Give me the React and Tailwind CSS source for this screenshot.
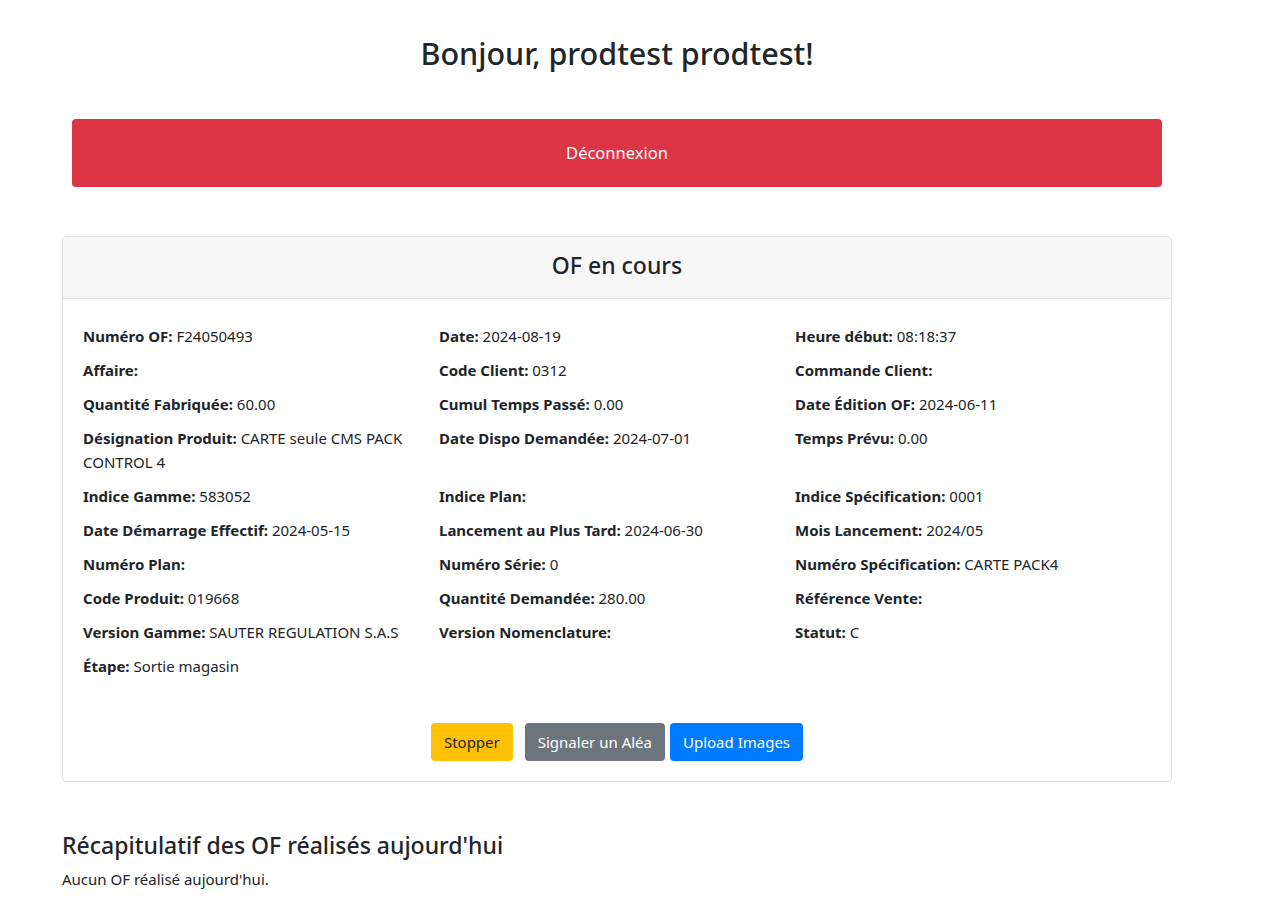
const fields = [
  [["Numéro OF:", "F24050493"], ["Date:", "2024-08-19"], ["Heure début:", "08:18:37"]],
  [["Affaire:", ""], ["Code Client:", "0312"], ["Commande Client:", ""]],
  [["Quantité Fabriquée:", "60.00"], ["Cumul Temps Passé:", "0.00"], ["Date Édition OF:", "2024-06-11"]],
  [["Désignation Produit:", "CARTE seule CMS PACK CONTROL 4"], ["Date Dispo Demandée:", "2024-07-01"], ["Temps Prévu:", "0.00"]],
  [["Indice Gamme:", "583052"], ["Indice Plan:", ""], ["Indice Spécification:", "0001"]],
  [["Date Démarrage Effectif:", "2024-05-15"], ["Lancement au Plus Tard:", "2024-06-30"], ["Mois Lancement:", "2024/05"]],
  [["Numéro Plan:", ""], ["Numéro Série:", "0"], ["Numéro Spécification:", "CARTE PACK4"]],
  [["Code Produit:", "019668"], ["Quantité Demandée:", "280.00"], ["Référence Vente:", ""]],
  [["Version Gamme:", "SAUTER REGULATION S.A.S"], ["Version Nomenclature:", ""], ["Statut:", "C"]],
  [["Étape:", "Sortie magasin"]],
];

function App() {
  return (
    <div
      className="min-h-screen bg-white text-[#212529] pb-10"
      style={{ fontFamily: '"Noto Sans", "Open Sans", sans-serif' }}
    >
      <div className="ml-[62px] w-[1110px]">
        <h1 className="pt-[31px] text-center text-[30.5px] leading-[44px] font-medium">
          Bonjour, prodtest prodtest!
        </h1>

        <div className="mt-[44px] px-[10px]">
          <button className="w-full h-[68px] bg-[#dc3545] text-white text-[16.5px] rounded-[4px]">
            Déconnexion
          </button>
        </div>

        <div className="mt-[49px] border border-[#dfdfdf] rounded-[4px]">
          <div className="h-[62px] pb-[5px] bg-[#f7f7f7] border-b border-[#dfdfdf] flex items-center justify-center">
            <h2 className="text-[23px] font-medium">OF en cours</h2>
          </div>
          <div className="px-5 pt-[25px] pb-5">
            {fields.map((row, i) => (
              <div key={i} className="grid grid-cols-3">
                {row.map(([label, value], j) => (
                  <p key={j} className="mb-[10px] pr-5 text-[15px] leading-6">
                    <strong className="font-bold">{label}</strong>
                    {value ? " " + value : ""}
                  </p>
                ))}
              </div>
            ))}
            <div className="mt-[35px] flex justify-center">
              <button className="h-[38px] px-[13px] bg-[#ffc107] text-[#212529] text-[15px] rounded-[4px]">
                Stopper
              </button>
              <button className="ml-3 h-[38px] px-[13px] bg-[#6c757d] text-white text-[15px] rounded-[4px]">
                Signaler un Aléa
              </button>
              <button className="ml-[5px] h-[38px] px-[13px] bg-[#007bff] text-white text-[15px] rounded-[4px]">
                Upload Images
              </button>
            </div>
          </div>
        </div>

        <h3 className="mt-[48px] text-[23px] leading-[30px] font-medium">
          Récapitulatif des OF réalisés aujourd'hui
        </h3>
        <p className="mt-[7px] text-[15px] leading-6">Aucun OF réalisé aujourd'hui.</p>
      </div>
    </div>
  );
}

export default App;
